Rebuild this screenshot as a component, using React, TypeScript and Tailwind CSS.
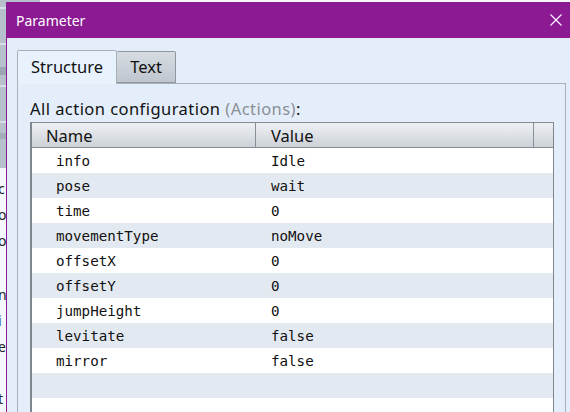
const rows: [string, string][] = [
  ["info", "Idle"],
  ["pose", "wait"],
  ["time", "0"],
  ["movementType", "noMove"],
  ["offsetX", "0"],
  ["offsetY", "0"],
  ["jumpHeight", "0"],
  ["levitate", "false"],
  ["mirror", "false"],
  ["", ""],
];

const ui = { fontFamily: '"Noto Sans", "Open Sans", sans-serif' };
const mono = { fontFamily: '"DejaVu Sans Mono", "Liberation Mono", monospace' };

function BackgroundApp() {
  return (
    <div className="flex h-full w-full flex-col bg-[#f4f7fb]">
      <div className="h-[2px] w-full bg-[linear-gradient(90deg,#b8c0c8_0%,#b8c0c8_65%,#3a2f3a_66%,#8a8f96_70%,#2e2630_75%,#9aa0a8_80%,#2b2330_90%,#8d939a_100%)]" />
      <div className="flex flex-1">
        <div className="flex w-[40px] flex-col text-[14px] text-[#222]" style={ui}>
          <div className="flex h-[168px] flex-col bg-[#b7c1cb]">
            <div className="mt-[7px] h-[2px] bg-[#d7dee5]" />
            <div className="mt-[34px] h-[2px] bg-[#d7dee5]" />
            <div className="mt-[22px] h-[8px] bg-[#9aa6b2]" />
            <div className="mt-[10px] h-[2px] bg-[#d7dee5]" />
            <div className="mt-[34px] h-[2px] bg-[#d7dee5]" />
            <div className="mt-[10px] h-[6px] bg-[#a3aebb]" />
          </div>
          <div className="flex flex-col pt-[8px] leading-[26px]">
            <span className="-ml-[2px]">c</span>
            <span className="-ml-[2px]">o</span>
            <span className="-ml-[2px]">o</span>
            <span className="h-[28px]" />
            <span className="-ml-[2px]">n</span>
            <span className="-ml-[2px]">i</span>
            <span className="-ml-[2px]">e</span>
            <span className="h-[26px]" />
            <span className="-ml-[2px]">t</span>
          </div>
        </div>
      </div>
    </div>
  );
}

function CloseIcon() {
  return (
    <svg width="12" height="12" viewBox="0 0 12 12" className="text-white">
      <path d="M0.5 0.5 L11.5 11.5 M11.5 0.5 L0.5 11.5" stroke="currentColor" strokeWidth="1.1" fill="none" />
    </svg>
  );
}

export default function App() {
  return (
    <div className="relative h-[412px] w-[570px] overflow-hidden">
      <BackgroundApp />

      {/* dialog window */}
      <div className="absolute left-[6px] top-[2px] bottom-0 right-0 flex flex-col border-l border-[#8b1a93] bg-[#e4eefb]">
        <div className="flex h-[36px] shrink-0 items-center justify-between bg-[#8b1a93] pl-[9px] pr-[8px]">
          <span className="text-[14px] text-white" style={ui}>
            Parameter
          </span>
          <CloseIcon />
        </div>

        <div className="flex flex-1 flex-col pl-[10px] pr-[4px] pt-[12px]">
          {/* tabs */}
          <div className="flex items-end" style={ui}>
            <div className="relative z-10 -mb-px flex h-[34px] w-[100px] items-center justify-center rounded-t-[2px] border border-b-0 border-[#a9b0b8] bg-[#e8f2fd] text-[16.5px] text-[#111]">
              Structure
            </div>
            <div className="flex h-[32px] w-[59px] items-center justify-center rounded-t-[2px] border border-l-0 border-[#8f969e] bg-[linear-gradient(#d6dce2,#bfc6ce)] text-[16.5px] text-[#111]">
              Text
            </div>
          </div>

          <div className="flex flex-1 flex-col border border-b-0 border-[#a9b0b8] bg-[#e4eefb] pl-[12px] pr-[11px] pt-[13px]">
            <div
              className="h-[25px] whitespace-nowrap text-[16.5px] leading-[24px] tracking-[0.45px] text-[#111]"
              style={ui}
            >
              All action configuration <span className="text-[#8a8f95]">(Actions)</span>:
            </div>

            {/* property grid */}
            <div className="flex flex-1 flex-col border-x border-[#7f868e] border-l-2 bg-white">
              <div
                className="flex h-[26px] shrink-0 border-y border-[#858c94] bg-[linear-gradient(#eef0f3,#cdd2d8)] text-[16.5px] text-[#111]"
                style={ui}
              >
                <div className="flex w-[224px] items-center border-r border-[#8a9097] pl-[14px] pt-[2px]">Name</div>
                <div className="flex w-[278px] items-center border-r border-[#8a9097] pl-[15px] pt-[2px]">Value</div>
                <div className="flex-1" />
              </div>
              {rows.map(([name, value], i) => (
                <div
                  key={i}
                  className={`flex h-[25px] shrink-0 items-center pt-[3px] text-[14.2px] text-[#111] ${
                    i % 2 === 1 ? "bg-[#e3e9f0]" : "bg-white"
                  }`}
                  style={mono}
                >
                  <div className="w-[224px] pl-[24px]">{name}</div>
                  <div className="pl-[15px]">{value}</div>
                </div>
              ))}
              <div className="flex-1 bg-white" />
            </div>
          </div>
        </div>
      </div>
    </div>
  );
}
